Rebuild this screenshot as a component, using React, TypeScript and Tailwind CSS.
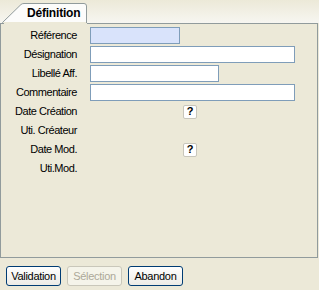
import React from 'react'

const font = { fontFamily: '"Liberation Sans", Arial, sans-serif' }

function Field({ label, width, blue }: { label: string; width: number; blue?: boolean }) {
  return (
    <div className="flex items-center h-[17px]">
      <span className="w-[76px] text-right text-[11px] tracking-[-0.45px] leading-none text-black">{label}</span>
      <div
        className={`ml-[13px] h-[17px] border border-[#7f9db9] ${blue ? 'bg-[#d9e3fb]' : 'bg-white'}`}
        style={{ width }}
      />
    </div>
  )
}

function InfoRow({ label, help }: { label: string; help?: boolean }) {
  return (
    <div className="flex items-center h-[17px]">
      <span className="w-[76px] text-right text-[11px] tracking-[-0.45px] leading-none text-black">{label}</span>
      {help && (
        <div className="ml-[106px] w-[14px] h-[14px] flex items-center justify-center bg-white border border-[#c8c6bb] rounded-[2px] text-[11px] font-bold leading-none text-black">
          ?
        </div>
      )}
    </div>
  )
}

function XpButton({ children, disabled }: { children: React.ReactNode; disabled?: boolean }) {
  return (
    <button
      className={`w-[55px] h-[20px] rounded-[3px] border text-[11px] tracking-[-0.3px] leading-none flex items-center justify-center ${
        disabled
          ? 'border-[#c9c7ba] text-[#aca899] bg-[#f5f4ea]'
          : 'border-[#003c74] text-black bg-gradient-to-b from-white to-[#ecebe6]'
      }`}
    >
      {children}
    </button>
  )
}

export default function App() {
  return (
    <div className="w-[319px] h-[290px] bg-[#ece9d8] flex flex-col" style={font}>
      {/* tab strip */}
      <div className="relative h-[23px] bg-gradient-to-b from-[#ece9d8] to-[#f7f6f1]">
        <svg className="absolute left-0 top-0" width="90" height="24" viewBox="0 0 90 24">
          <path d="M2.5 24 L2.5 22.5 L21 4.5 Q22 3.5 24 3.5 L84 3.5 Q86.5 3.5 86.5 6 L86.5 24 Z" fill="#fcfcfb" stroke="#919b9c" />
          <rect x="3" y="22" width="83" height="3" fill="#ece9d8" />
        </svg>
        <span className="absolute left-[27px] top-[7px] text-[12px] font-bold tracking-[-0.2px] leading-none text-black">Définition</span>
      </div>
      {/* panel */}
      <div className="h-[235px] w-[318px] border border-[#919b9c] border-t-0 relative bg-[#ece9d8]">
        <div className="absolute left-0 top-0 h-px w-[3px] bg-[#919b9c]" />
        <div className="absolute left-[86px] top-0 h-px right-0 bg-[#919b9c]" />
        <div className="flex flex-col gap-[2px] pt-[4px]">
          <Field label="Référence" width={90} blue />
          <Field label="Désignation" width={205} />
          <Field label="Libellé Aff." width={129} />
          <Field label="Commentaire" width={205} />
          <InfoRow label="Date Création" help />
          <InfoRow label="Uti. Créateur" />
          <InfoRow label="Date Mod." help />
          <InfoRow label="Uti.Mod." />
        </div>
      </div>
      {/* buttons */}
      <div className="flex gap-[6px] pl-[6px] pt-[8px]">
        <XpButton>Validation</XpButton>
        <XpButton disabled>Sélection</XpButton>
        <XpButton>Abandon</XpButton>
      </div>
    </div>
  )
}
